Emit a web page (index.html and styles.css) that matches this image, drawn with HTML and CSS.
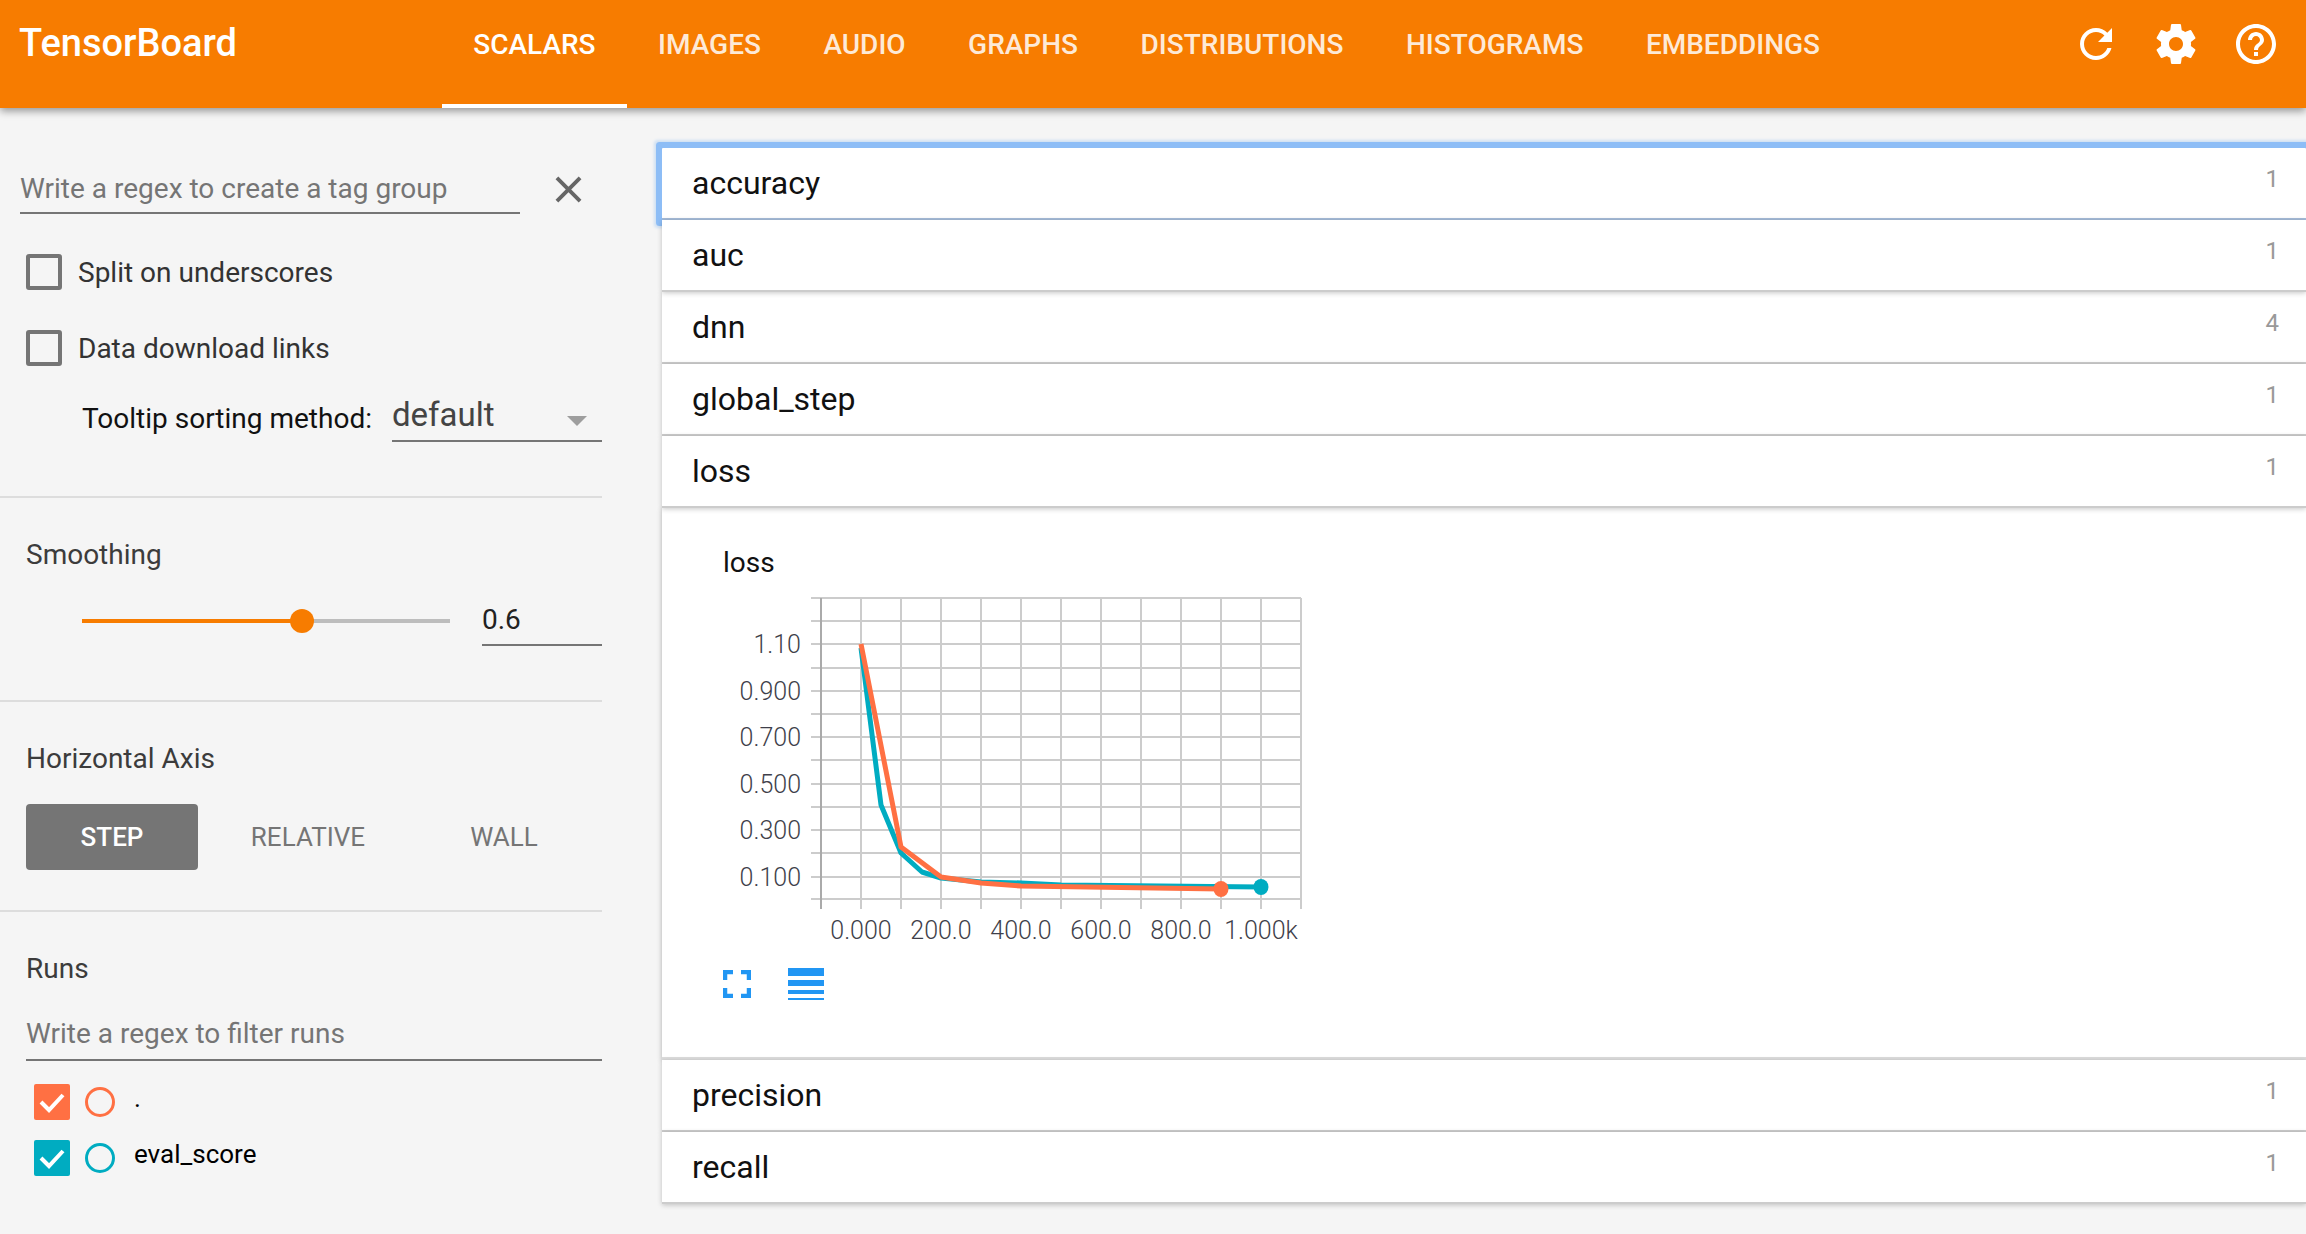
FILE: index.html
```html
<!DOCTYPE html>
<html>
<head>
<meta charset="utf-8">
<title>TensorBoard</title>
<link rel="stylesheet" href="styles.css">
</head>
<body>
<header class="topbar">
	<div class="logo">TensorBoard</div>
	<nav class="tabs">
		<a class="tab active">SCALARS</a>
		<a class="tab">IMAGES</a>
		<a class="tab">AUDIO</a>
		<a class="tab">GRAPHS</a>
		<a class="tab">DISTRIBUTIONS</a>
		<a class="tab">HISTOGRAMS</a>
		<a class="tab">EMBEDDINGS</a>
	</nav>
	<div class="actions">
		<button class="iconbtn"><svg viewBox="0 0 24 24"><path d="M17.65 6.35C16.2 4.9 14.21 4 12 4c-4.42 0-7.99 3.58-7.99 8s3.57 8 7.99 8c3.73 0 6.84-2.55 7.73-6h-2.08c-.82 2.33-3.04 4-5.65 4-3.31 0-6-2.69-6-6s2.69-6 6-6c1.66 0 3.14.69 4.22 1.78L13 11h7V4l-2.35 2.35z"/></svg></button>
		<button class="iconbtn"><svg viewBox="0 0 24 24"><path d="M19.43 12.98c.04-.32.07-.64.07-.98s-.03-.66-.07-.98l2.11-1.65c.19-.15.24-.42.12-.64l-2-3.46c-.12-.22-.39-.3-.61-.22l-2.49 1c-.52-.4-1.08-.73-1.69-.98l-.38-2.65C14.46 2.18 14.25 2 14 2h-4c-.25 0-.46.18-.49.42l-.38 2.65c-.61.25-1.17.59-1.69.98l-2.49-1c-.23-.09-.49 0-.61.22l-2 3.46c-.13.22-.07.49.12.64l2.11 1.65c-.04.32-.07.65-.07.98s.03.66.07.98l-2.11 1.65c-.19.15-.24.42-.12.64l2 3.46c.12.22.39.3.61.22l2.49-1c.52.4 1.08.73 1.69.98l.38 2.65c.03.24.24.42.49.42h4c.25 0 .46-.18.49-.42l.38-2.65c.61-.25 1.17-.59 1.69-.98l2.49 1c.23.09.49 0 .61-.22l2-3.46c.12-.22.07-.49-.12-.64l-2.11-1.65zM12 15.5c-1.93 0-3.5-1.57-3.5-3.5s1.57-3.5 3.5-3.5 3.5 1.57 3.5 3.5-1.57 3.5-3.5 3.5z"/></svg></button>
		<button class="iconbtn"><svg viewBox="0 0 24 24"><path d="M11 18h2v-2h-2v2zm1-16C6.48 2 2 6.48 2 12s4.48 10 10 10 10-4.48 10-10S17.52 2 12 2zm0 18c-4.41 0-8-3.59-8-8s3.59-8 8-8 8 3.59 8 8-3.59 8-8 8zm0-14c-2.21 0-4 1.79-4 4h2c0-1.1.9-2 2-2s2 .9 2 2c0 2-3 1.75-3 5h2c0-2.25 3-2.5 3-5 0-2.21-1.79-4-4-4z"/></svg></button>
	</div>
</header>

<div class="page">
	<aside class="sidebar">
		<section class="side-options">
			<div class="regex-row">
				<div class="textline regex-input">Write a regex to create a tag group</div>
				<svg class="closeicon" viewBox="0 0 28 28"><path d="M2 2L26 26M26 2L2 26"/></svg>
			</div>
			<label class="check-row"><span class="checkbox"></span>Split on underscores</label>
			<label class="check-row"><span class="checkbox"></span>Data download links</label>
			<div class="sort-row">
				<span class="sort-label">Tooltip sorting method:</span>
				<div class="select">default<span class="caret"></span></div>
			</div>
		</section>

		<section class="side-smoothing">
			<h3 class="side-title">Smoothing</h3>
			<div class="slider-row">
				<div class="slider"><span class="slider-fill"></span><span class="slider-knob"></span></div>
				<div class="slider-value">0.6</div>
			</div>
		</section>

		<section class="side-axis">
			<h3 class="side-title">Horizontal Axis</h3>
			<div class="axis-buttons">
				<button class="axisbtn selected">STEP</button>
				<button class="axisbtn relative">RELATIVE</button>
				<button class="axisbtn wall">WALL</button>
			</div>
		</section>

		<section class="side-runs">
			<h3 class="side-title">Runs</h3>
			<div class="textline filter-input">Write a regex to filter runs</div>
			<div class="run">
				<span class="runbox orange"><svg viewBox="0 0 36 36"><path d="M7 18L15 26L29 11"/></svg></span>
				<span class="runring ring-orange"></span>
				<span class="runname">.</span>
			</div>
			<div class="run">
				<span class="runbox teal"><svg viewBox="0 0 36 36"><path d="M7 18L15 26L29 11"/></svg></span>
				<span class="runring ring-teal"></span>
				<span class="runname">eval_score</span>
			</div>
		</section>
	</aside>

	<main class="content">
		<div class="pane focused"><span>accuracy</span><span class="count">1</span></div>
		<div class="pane"><span>auc</span><span class="count">1</span></div>
		<div class="pane"><span>dnn</span><span class="count">4</span></div>
		<div class="pane"><span>global_step</span><span class="count">1</span></div>
		<div class="pane"><span>loss</span><span class="count">1</span></div>
		<div class="chartcard">
			<div class="chart-title">loss</div>
			<svg class="chart" width="600" height="360" viewBox="723 590 600 360">
				<g class="grid">
					<path d="M811 598H1301M811 621H1301M811 644H1301M811 668H1301M811 691H1301M811 714H1301M811 737H1301M811 760H1301M811 784H1301M811 807H1301M811 830H1301M811 853H1301M811 877H1301M811 899H1301"/>
					<path d="M861 598V909M901 598V909M941 598V909M981 598V909M1021 598V909M1061 598V909M1101 598V909M1141 598V909M1181 598V909M1221 598V909M1261 598V909M1301 598V909"/>
				</g>
				<path class="axisline" d="M821 598V909"/>
				<g class="ylabels">
					<text x="801" y="653">1.10</text>
					<text x="801" y="700">0.900</text>
					<text x="801" y="746">0.700</text>
					<text x="801" y="793">0.500</text>
					<text x="801" y="839">0.300</text>
					<text x="801" y="886">0.100</text>
				</g>
				<g class="xlabels">
					<text x="861" y="939">0.000</text>
					<text x="941" y="939">200.0</text>
					<text x="1021" y="939">400.0</text>
					<text x="1101" y="939">600.0</text>
					<text x="1181" y="939">800.0</text>
					<text x="1261" y="939">1.000k</text>
				</g>
				<path class="series s-teal" d="M861 648L881 805L901 853L922 872L941 878L981 882L1021 883L1061 885L1261 887"/>
				<ellipse class="dot-teal" cx="1261" cy="887" rx="7.5" ry="8"/>
				<path class="series s-orange" d="M861 644L901 847L941 877L981 883L1021 886L1221 889"/>
				<ellipse class="dot-orange" cx="1221" cy="889" rx="7.5" ry="8"/>
			</svg>
			<div class="chart-tools">
				<svg class="tool-full" viewBox="0 0 28 28"><path d="M2 10V2H10M18 2H26V10M26 18V26H18M10 26H2V18"/></svg>
				<div class="tool-lines"><span class="l1"></span><span class="l2"></span><span class="l3"></span><span class="l4"></span></div>
			</div>
		</div>
		<div class="pane"><span>precision</span><span class="count">1</span></div>
		<div class="pane"><span>recall</span><span class="count">1</span></div>
	</main>
</div>
</body>
</html>
```

FILE: styles.css
```css
html, body {
	margin: 0;
	height: 100%;
	overflow: hidden;
}
body {
	background-color: #f5f5f5;
	font-family: Roboto, "Liberation Sans", sans-serif;
	color: #212121;
}

/* top bar */
.topbar {
	display: flex;
	height: 108px;
	background-color: #f77c00;
	color: #fff;
	box-shadow: 0 3px 8px rgba(0, 0, 0, 0.4);
	position: relative;
	z-index: 5;
}
.logo {
	width: 423px;
	padding: 20px 0 0 19px;
	font-size: 38px;
	line-height: 46px;
	font-weight: 500;
}
.tabs {
	display: flex;
}
.tab {
	padding: 28px 31.25px 0;
	font-size: 28px;
	line-height: 34px;
	font-weight: 500;
	color: rgba(255, 255, 255, 0.85);
	box-sizing: border-box;
}
.tab.active {
	color: #fff;
	border-bottom: 4px solid #fff;
}
.actions {
	display: flex;
	margin-left: auto;
	padding-right: 10px;
}
.iconbtn {
	width: 80px;
	height: 88px;
	padding: 0;
	border: 0;
	background: none;
}
.iconbtn svg {
	width: 48px;
	height: 48px;
	fill: #fff;
	display: block;
	margin: 20px auto;
}

/* left column */
.page {
	display: flex;
	align-items: flex-start;
}
.sidebar {
	width: 602px;
	flex: none;
	font-size: 28px;
}
.sidebar section {
	border-bottom: 2px solid #ddd;
	box-sizing: border-box;
}
.side-options {
	height: 390px;
	padding-top: 62px;
}
.regex-row {
	display: flex;
	align-items: center;
	margin-left: 20px;
}
.textline {
	color: #757575;
	border-bottom: 2px solid #757575;
	box-sizing: border-box;
}
.regex-input {
	width: 500px;
	height: 44px;
	line-height: 38px;
}
.closeicon {
	width: 27px;
	height: 27px;
	margin: -6px 0 0 35px;
	fill: none;
	stroke: #666;
	stroke-width: 4;
}
.check-row {
	display: flex;
	align-items: center;
	height: 36px;
	margin: 40px 0 0 26px;
	color: #333;
}
.checkbox {
	width: 36px;
	height: 36px;
	margin-right: 16px;
	border: 4px solid #757575;
	border-radius: 3px;
	box-sizing: border-box;
}
.sort-row {
	display: flex;
	align-items: flex-end;
	margin: 30px 0 0 82px;
}
.sort-label {
	width: 310px;
	padding-bottom: 7px;
	color: #111;
}
.select {
	display: flex;
	align-items: center;
	justify-content: space-between;
	width: 210px;
	height: 46px;
	padding: 0 15px 7px 0;
	font-size: 33px;
	color: #444;
	border-bottom: 2px solid #757575;
	box-sizing: border-box;
}
.caret {
	border-left: 10px solid transparent;
	border-right: 10px solid transparent;
	border-top: 10px solid #9e9e9e;
	margin-top: 12px;
}
.side-title {
	margin: 0 0 0 26px;
	font-size: 28px;
	line-height: 34px;
	font-weight: 400;
	color: #3c3c3c;
}
.side-smoothing {
	height: 204px;
	padding-top: 40px;
}
.slider-row {
	display: flex;
	align-items: center;
	margin: 24px 0 0 82px;
}
.slider {
	width: 368px;
	height: 4px;
	background-color: #bdbdbd;
	position: relative;
}
.slider-fill {
	display: block;
	width: 220px;
	height: 4px;
	background-color: #f77c00;
}
.slider-knob {
	position: absolute;
	left: 208px;
	top: -10px;
	width: 24px;
	height: 24px;
	border-radius: 50%;
	background-color: #f77c00;
}
.slider-value {
	width: 120px;
	height: 50px;
	margin-left: 32px;
	line-height: 48px;
	color: #222;
	border-bottom: 2px solid #757575;
	box-sizing: border-box;
}
.side-axis {
	height: 210px;
	padding-top: 40px;
}
.axis-buttons {
	display: flex;
	margin: 28px 0 0 26px;
}
.axisbtn {
	width: 172px;
	height: 66px;
	padding: 0;
	border: 0;
	border-radius: 4px;
	background: none;
	font-family: Roboto, "Liberation Sans", sans-serif;
	font-size: 26px;
	color: #757575;
}
.axisbtn.selected {
	background-color: #757575;
	color: #fff;
	font-weight: 500;
}
.axisbtn.relative {
	width: 220px;
}
.side-runs {
	border-bottom: 0 !important;
	padding-top: 40px;
}
.filter-input {
	height: 48px;
	margin: 27px 0 0 26px;
	line-height: 42px;
}
.run {
	display: flex;
	align-items: center;
	height: 36px;
	margin: 23px 0 0 34px;
}
.run + .run {
	margin-top: 20px;
}
.runbox {
	width: 36px;
	height: 36px;
	border-radius: 2px;
}
.runbox svg {
	display: block;
	fill: none;
	stroke: #fff;
	stroke-width: 4;
}
.orange {
	background-color: #ff7043;
}
.teal {
	background-color: #00acc1;
}
.runring {
	width: 30px;
	height: 30px;
	margin-left: 15px;
	border: 3px solid;
	border-radius: 50%;
	box-sizing: border-box;
}
.ring-orange {
	border-color: #ff7043;
}
.ring-teal {
	border-color: #00acc1;
}
.runname {
	margin: 0 0 8px 19px;
	font-size: 26px;
	color: #000;
}

/* right column */
.content {
	flex: 1;
	margin: 40px 0 0 60px;
}
.pane {
	display: flex;
	justify-content: space-between;
	align-items: center;
	height: 72px;
	padding: 0 27px 0 30px;
	font-size: 32px;
	color: #111;
	background-color: #fff;
	border-bottom: 2px solid #ccc;
	box-shadow: 0 1px 5px rgba(0, 0, 0, 0.22);
	box-sizing: border-box;
	position: relative;
}
.pane.focused {
	box-shadow: 0 0 0 6px #8dbdf6, 0 0 3px 8px #cfe0f3;
	border-bottom-color: #a6bcd9;
	border-radius: 1px;
}
.pane.focused + .pane {
	z-index: 1;
}
.count {
	margin-bottom: 8px;
	font-size: 24px;
	color: #999;
}
.chartcard {
	height: 552px;
	padding: 37px 0 0 61px;
	background-color: #fff;
	border-bottom: 3px solid #ddd;
	box-shadow: 0 1px 5px rgba(0, 0, 0, 0.3);
	box-sizing: border-box;
}
.chart-title {
	font-size: 28px;
	line-height: 36px;
	color: #111;
}
.chart {
	display: block;
	margin-top: 9px;
}
.grid path {
	fill: none;
	stroke: #ccc;
	stroke-width: 2;
}
.axisline {
	stroke: #aaa;
	stroke-width: 2;
}
.ylabels text, .xlabels text {
	font-family: Roboto, "Liberation Sans", sans-serif;
	font-weight: 300;
	font-size: 25px;
	fill: #3f3f4a;
}
.ylabels text {
	text-anchor: end;
}
.xlabels text {
	text-anchor: middle;
}
.series {
	fill: none;
	stroke-width: 5;
	stroke-linejoin: round;
}
.s-teal {
	stroke: #00acc1;
}
.s-orange {
	stroke: #ff7043;
}
.dot-teal {
	fill: #00acc1;
}
.dot-orange {
	fill: #ff7043;
}
.chart-tools {
	display: flex;
	align-items: flex-start;
	margin-top: 18px;
}
.tool-full {
	width: 28px;
	height: 28px;
	margin-top: 2px;
	fill: none;
	stroke: #2196f3;
	stroke-width: 4.5;
}
.tool-lines {
	width: 36px;
	margin-left: 37px;
}
.tool-lines span {
	display: block;
	background-color: #2196f3;
}
.l1 {
	height: 8px;
}
.l2 {
	height: 6px;
	margin-top: 4px;
}
.l3 {
	height: 4px;
	margin-top: 4px;
}
.l4 {
	height: 2px;
	margin-top: 4px;
}
```
